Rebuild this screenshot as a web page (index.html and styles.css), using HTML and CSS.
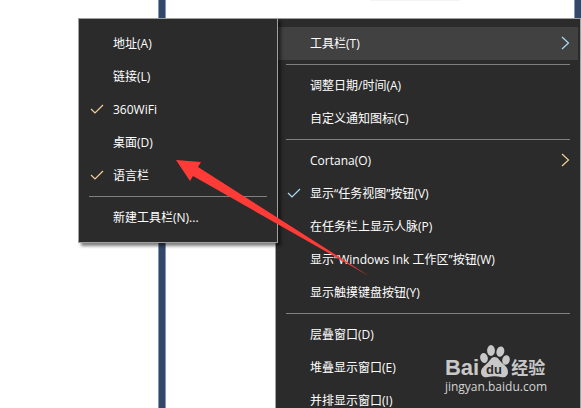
FILE: index.html
```html
<!DOCTYPE html>
<html lang="zh-CN">

<head>
    <meta charset="UTF-8">
    <meta name="viewport" content="width=device-width, initial-scale=1.0">
    <title>工具栏</title>
    <link rel="stylesheet" href="styles.css">
</head>

<body>
    <div class="desktop">
        <div class="pane pane-side"></div>
        <div class="pane pane-main">
            <div class="pane-shadow"></div>
        </div>
    </div>

    <svg class="sprites" aria-hidden="true">
        <symbol id="check" viewBox="0 0 14 15">
            <path d="M1 7 L5 11 L13 3" fill="none" stroke="currentColor" stroke-width="1.2" />
        </symbol>
        <symbol id="chevron" viewBox="0 0 9 15">
            <path d="M1 1 L7.5 7 L1 13" fill="none" stroke="currentColor" stroke-width="1.2" />
        </symbol>
    </svg>

    <div class="menu menu-taskbar" role="menu">
        <button class="item active" role="menuitem" aria-haspopup="true">工具栏(T)<svg class="chevron cool"><use href="#chevron" /></svg></button>
        <hr class="separator">
        <button class="item" role="menuitem">调整日期/时间(A)</button>
        <button class="item" role="menuitem">自定义通知图标(C)</button>
        <hr class="separator">
        <button class="item" role="menuitem" aria-haspopup="true">Cortana(O)<svg class="chevron warm"><use href="#chevron" /></svg></button>
        <button class="item" role="menuitemcheckbox" aria-checked="true"><svg class="check cool"><use href="#check" /></svg>显示“任务视图”按钮(V)</button>
        <button class="item" role="menuitemcheckbox" aria-checked="false">在任务栏上显示人脉(P)</button>
        <button class="item" role="menuitemcheckbox" aria-checked="false">显示“Windows Ink 工作区”按钮(W)</button>
        <button class="item" role="menuitemcheckbox" aria-checked="false">显示触摸键盘按钮(Y)</button>
        <hr class="separator">
        <button class="item" role="menuitem">层叠窗口(D)</button>
        <button class="item" role="menuitem">堆叠显示窗口(E)</button>
        <button class="item" role="menuitem">并排显示窗口(I)</button>
    </div>

    <div class="menu menu-toolbars" role="menu">
        <button class="item" role="menuitemcheckbox" aria-checked="false">地址(A)</button>
        <button class="item" role="menuitemcheckbox" aria-checked="false">链接(L)</button>
        <button class="item" role="menuitemcheckbox" aria-checked="true"><svg class="check warm"><use href="#check" /></svg>360WiFi</button>
        <button class="item" role="menuitemcheckbox" aria-checked="false">桌面(D)</button>
        <button class="item" role="menuitemcheckbox" aria-checked="true"><svg class="check warm"><use href="#check" /></svg>语言栏</button>
        <hr class="separator">
        <button class="item" role="menuitem">新建工具栏(N)...</button>
    </div>

    <svg class="pointer" viewBox="0 0 194 118" aria-hidden="true">
        <path d="M1 1 L26 3 L23 8 L194 117 L18 17 L15 22 Z" fill="#ff3b38" />
    </svg>

    <div class="watermark">
        <div class="brand">
            <span class="brand-latin">Bai</span>
            <svg class="paw" viewBox="0 0 30 34">
                <g fill="currentColor">
                    <ellipse cx="4" cy="14" rx="3.8" ry="5" transform="rotate(-12 4 14)" />
                    <ellipse cx="11" cy="6.5" rx="3.9" ry="5.4" />
                    <ellipse cx="20.5" cy="7.5" rx="3.9" ry="5.2" transform="rotate(14 20 7)" />
                    <ellipse cx="26" cy="16" rx="3.7" ry="4.8" transform="rotate(14 26 16)" />
                    <path d="M14.5 13 C18 13 19 16 21.5 18.5 C25 21.500 28 23.500 28 28 C28 32 25 34 21 33 C17 32 12 32 8 33 C4 34 1 32 1 28 C1 24 5 21.500 8 18.500 C10.500 16 11.500 13 14.500 13 Z" />
                </g>
                <text class="paw-text" x="14" y="30" text-anchor="middle">du</text>
            </svg>
            <span class="brand-cjk">经验</span>
        </div>
        <div class="brand-url">jingyan.baidu.com</div>
    </div>
</body>

</html>
```

FILE: styles.css
```css
* {
    box-sizing: border-box;
}

body {
    margin: 0;
    height: 100vh;
    position: relative;
    overflow: hidden;
    background: #fff;
    font-family: "Open Sans", "Noto Sans CJK SC", sans-serif;
    font-size: 12px;
    line-height: 16px;
}

/* windows behind the menus */
.desktop {
    display: flex;
    height: 100%;
    padding-right: 7px;
    background: #324866;
}

.pane {
    background: #fff;
}

.pane-side {
    width: 158px;
    margin-right: 8px;
    box-shadow: 1px 0 #8795b8;
}

.pane-main {
    flex: 1;
    box-shadow: -1px 0 #8795b8, 1px 0 #8795b8;
}

.pane-shadow {
    width: 90px;
    height: 1px;
    margin-left: 204px;
    background: #f4f4f4;
}

.sprites {
    position: absolute;
    width: 0;
    height: 0;
}

/* menus */
.menu {
    position: absolute;
    top: 18px;
    padding: 8px 2px;
    background: #2b2b2b;
    border: 1px solid #a0a0a0;
}

.menu-taskbar {
    right: 0;
    width: 306px;
}

.menu-toolbars {
    right: 303px;
    width: 200px;
    box-shadow: 3px 3px 3px rgba(0, 0, 0, 0.5);
}

.item {
    display: flex;
    align-items: center;
    position: relative;
    width: 100%;
    height: 33px;
    padding: 0 8px 0 32px;
    border: 0;
    background: none;
    color: #fff;
    font: inherit;
    text-align: left;
    white-space: pre;
}

.item:hover,
.item.active {
    background: #414141;
}

.separator {
    height: 1px;
    margin: 4px 8px;
    border: 0;
    background: #808080;
}

.check {
    position: absolute;
    left: 9px;
    width: 14px;
    height: 15px;
}

.chevron {
    width: 9px;
    height: 15px;
    margin-left: auto;
}

.warm {
    color: #f0cf9a;
}

.cool {
    color: #a9dcf5;
}

.pointer {
    position: absolute;
    top: 159px;
    right: 212px;
    width: 194px;
    height: 118px;
    pointer-events: none;
}

/* watermark */
.watermark {
    position: absolute;
    right: 34px;
    bottom: 12px;
    color: #c8c8c8;
}

.brand {
    display: flex;
    align-items: flex-end;
    gap: 1px;
    height: 34px;
}

.brand-latin {
    font: bold 22px/20px "Liberation Sans", sans-serif;
}

.brand-cjk {
    font: bold 17px/22px "Noto Sans CJK SC", sans-serif;
}

.paw {
    width: 30px;
    height: 34px;
}

.paw-text {
    font: bold 13px "Liberation Sans", sans-serif;
    fill: #2b2b2b;
}

.brand-url {
    color: #d4d4d4;
    line-height: 18px;
}
```
